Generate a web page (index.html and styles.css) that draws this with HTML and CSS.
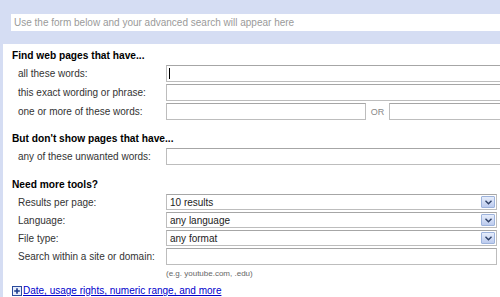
FILE: index.html
```html
<!DOCTYPE html>
<html lang="en">

<head>
    <meta charset="UTF-8">
    <meta name="viewport" content="width=device-width, initial-scale=1.0">
    <title>Advanced Search</title>
    <link rel="stylesheet" href="styles.css">
</head>

<body>
    <div class="preview">
        <div class="preview-box">Use the form below and your advanced search will appear here</div>
    </div>

    <div class="main">
        <div class="section first">
            <h3>Find web pages that have...</h3>
            <div class="row">
                <label for="as-all">all these words:</label>
                <div class="field focused"><input type="text" id="as-all" class="text wide"></div>
            </div>
            <div class="row">
                <label for="as-exact">this exact wording or phrase:</label>
                <div class="field"><input type="text" id="as-exact" class="text wide"></div>
            </div>
            <div class="row">
                <label for="as-or1">one or more of these words:</label>
                <div class="field or-field">
                    <input type="text" id="as-or1" class="text half">
                    <span class="or">OR</span>
                    <input type="text" class="text half">
                </div>
            </div>
        </div>

        <div class="section">
            <h3>But don't show pages that have...</h3>
            <div class="row">
                <label for="as-not">any of these unwanted words:</label>
                <div class="field"><input type="text" id="as-not" class="text wide"></div>
            </div>
        </div>

        <div class="section tools">
            <h3>Need more tools?</h3>
            <div class="row">
                <label>Results per page:</label>
                <div class="select"><span>10 results</span><span class="arrow"><svg width="7" height="5" viewBox="0 0 7 5"><path d="M0.5 0.8 L3.5 3.8 L6.5 0.8" fill="none" stroke="#2d3f66" stroke-width="1.4"/></svg></span></div>
            </div>
            <div class="row">
                <label>Language:</label>
                <div class="select"><span>any language</span><span class="arrow"><svg width="7" height="5" viewBox="0 0 7 5"><path d="M0.5 0.8 L3.5 3.8 L6.5 0.8" fill="none" stroke="#2d3f66" stroke-width="1.4"/></svg></span></div>
            </div>
            <div class="row">
                <label>File type:</label>
                <div class="select"><span>any format</span><span class="arrow"><svg width="7" height="5" viewBox="0 0 7 5"><path d="M0.5 0.8 L3.5 3.8 L6.5 0.8" fill="none" stroke="#2d3f66" stroke-width="1.4"/></svg></span></div>
            </div>
            <div class="row site-row">
                <label for="as-site">Search within a site or domain:</label>
                <div class="field"><input type="text" id="as-site" class="text site"></div>
            </div>
            <div class="hint">(e.g. youtube.com, .edu)</div>
        </div>

        <div class="more">
            <svg width="10" height="10" viewBox="0 0 10 10">
                <rect x="0.5" y="0.5" width="9" height="9" fill="#e8eefb" stroke="#2a4a9c"/>
                <path d="M5 2.2 V7.8 M2.2 5 H7.8" stroke="#1a3a8c" stroke-width="1.6"/>
            </svg>
            <a href="#">Date, usage rights, numeric range, and more</a>
        </div>
    </div>
</body>

</html>
```

FILE: styles.css
```css
body {
    font-family: "Liberation Sans", Arial, sans-serif;
    font-size: 10px;
    color: #222222;
    background-color: #ffffff;
    margin: 0;
    padding: 0;
    width: 500px;
    height: 297px;
    overflow: hidden;
}

.preview {
    background-color: #d5ddf3;
    height: 44px;
    padding: 14px 0 0 11px;
    box-sizing: border-box;
}

.preview-box {
    background-color: #ffffff;
    height: 17px;
    line-height: 17px;
    padding-left: 3px;
    color: #9a9a9a;
    white-space: nowrap;
}

.main {
    border-left: 3px solid #d5ddf3;
    padding-left: 9px;
    padding-top: 5px;
    height: 253px;
    box-sizing: border-box;
    overflow: hidden;
}

h3 {
    margin: 0 0 3px 0;
    font-size: 10.2px;
    line-height: 13px;
    font-weight: bold;
    color: #000000;
}

.section {
    margin-top: 12px;
}

.section.first {
    margin-top: 0;
}

.section.tools {
    margin-top: 13px;
}

.row {
    display: flex;
    align-items: center;
    height: 17px;
    margin-bottom: 2px;
}

.tools .row {
    height: 16px;
}

.tools .row.site-row {
    height: 17px;
    margin-bottom: 0;
}

label {
    width: 154px;
    flex-shrink: 0;
    padding-left: 6px;
    box-sizing: border-box;
    color: #333333;
    white-space: nowrap;
}

.field {
    position: relative;
    display: flex;
    align-items: center;
    overflow: hidden;
}

input.text {
    height: 17px;
    margin: 0;
    padding: 0 3px;
    border: 1px solid #bdbdbd;
    border-top-color: #a6a6a6;
    box-sizing: border-box;
    font-family: inherit;
    font-size: 10px;
    outline: none;
    flex-shrink: 0;
}

input.wide {
    width: 400px;
}

input.half {
    width: 200px;
}

input.site {
    width: 331px;
}

.field.focused::after {
    content: "";
    position: absolute;
    left: 3px;
    top: 3px;
    width: 1px;
    height: 11px;
    background-color: #000000;
}

.or {
    width: 23px;
    text-align: center;
    color: #888888;
    font-size: 9px;
    flex-shrink: 0;
}

.select {
    width: 331px;
    height: 16px;
    border: 1px solid #bdbdbd;
    border-top-color: #a6a6a6;
    box-sizing: border-box;
    display: flex;
    align-items: center;
    justify-content: space-between;
    padding-left: 3px;
    padding-right: 1px;
    color: #222222;
}

.arrow {
    width: 14px;
    height: 12px;
    box-sizing: border-box;
    border: 1px solid #9db3dc;
    border-radius: 1px;
    background: linear-gradient(#e6edfb, #bccbee);
    display: flex;
    align-items: center;
    justify-content: center;
}

.hint {
    margin: 4px 0 0 154px;
    font-size: 8px;
    line-height: 10px;
    color: #666666;
}

.more {
    margin-top: 6px;
    display: flex;
    align-items: center;
    gap: 1px;
    height: 11px;
    line-height: 11px;
}

.more a {
    color: #0000cc;
    text-decoration: underline;
}
```
